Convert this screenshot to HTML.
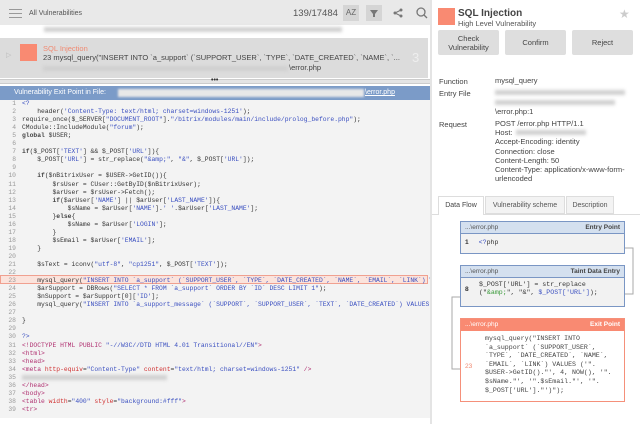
<!DOCTYPE html>
<html><head><meta charset="utf-8"><style>
*{margin:0;padding:0;box-sizing:border-box}
body{width:640px;height:424px;overflow:hidden;background:#fff;font-family:"Liberation Sans",sans-serif;font-size:8px;color:#333;position:relative}
.abs{position:absolute}
.blur{background:#d0d0d0;filter:blur(1.5px);height:5px;position:absolute}
.code{position:absolute;left:0;top:100px;width:430px;height:318px;background:#f3f3f3;font-family:"Liberation Mono",monospace;font-size:6.35px;color:#333}
.ln{position:absolute;left:0;width:430px;height:8.05px;line-height:8.05px;white-space:pre;overflow:hidden}
.ln b{font-weight:normal;display:inline-block;width:16px;text-align:right;color:#999;margin-right:6px}
.s{color:#3a4fc0}.k{color:#444;font-weight:bold}.t{color:#b03070}.a{color:#d03030}
.btn{position:absolute;top:30px;height:25px;width:61px;background:#dedede;border-radius:2px;font-size:7.5px;color:#444;text-align:center;display:flex;align-items:center;justify-content:center;line-height:9px}
.lbl{position:absolute;left:439px;font-size:7.5px;color:#444}
.val{position:absolute;left:495px;font-size:7.5px;color:#444;line-height:9.2px}
.box{position:absolute;left:460px;width:165px;border:1px solid #7a96c4;background:#f2f2f2;font-size:7px}
.bh{height:12px;background:#d4e0ef;border-bottom:1px solid #7a96c4;line-height:12px;padding:0 4px;color:#555;font-size:6.5px}
.bh span{float:right;font-weight:bold;color:#444}
.mono{font-family:"Liberation Mono",monospace;font-size:6.6px}
</style></head><body>
<div class="abs" style="left:0;top:0;width:430px;height:25px;background:#e9e9e9"></div>
<div class="abs" style="left:9px;top:9px;width:13px;height:1px;background:#999;box-shadow:0 4px 0 #999,0 8px 0 #999"></div>
<div class="abs" style="left:29px;top:10px;font-size:7px;color:#555">All Vulnerabilities</div>
<div class="abs" style="left:293px;top:8px;font-size:9.5px;color:#555">139/17484</div>
<div class="abs" style="left:343px;top:5px;width:16px;height:16px;background:#d5d5d5;font-size:8px;color:#666;text-align:center;line-height:16px">AZ</div>
<div class="abs" style="left:366px;top:5px;width:16px;height:16px;background:#d5d5d5"></div>
<svg class="abs" style="left:366px;top:5px" width="16" height="16"><path d="M4 5h8l-3 4v3h-2v-3z" fill="#777"/></svg>
<svg class="abs" style="left:390px;top:5px" width="16" height="16"><circle cx="5" cy="8" r="1.5" fill="#777"/><circle cx="11" cy="5" r="1.5" fill="#777"/><circle cx="11" cy="11" r="1.5" fill="#777"/><path d="M5 8L11 5M5 8L11 11" stroke="#777"/></svg>
<svg class="abs" style="left:414px;top:5px" width="16" height="16"><circle cx="7" cy="7" r="4" stroke="#777" fill="none" stroke-width="1.3"/><path d="M10 10l3 3" stroke="#777" stroke-width="1.3"/></svg>
<div class="blur" style="left:44px;top:27px;width:298px"></div>
<div class="abs" style="left:0;top:38px;width:428px;height:40px;background:#dcdcdc"></div>
<div class="abs" style="left:6px;top:51px;color:#bbb;font-size:7px">▷</div>
<div class="abs" style="left:20px;top:44px;width:17px;height:17px;background:#f98a72"></div>
<div class="abs" style="left:43px;top:44px;font-size:7.5px;color:#f08a72">SQL Injection</div>
<div class="abs" style="left:43px;top:53px;font-size:7.5px;color:#444;white-space:nowrap">23 mysql_query("INSERT INTO `a_support` (`SUPPORT_USER`, `TYPE`, `DATE_CREATED`, `NAME`, `...</div>
<div class="blur" style="left:43px;top:66px;width:245px"></div>
<div class="abs" style="left:289px;top:63px;font-size:7.5px;color:#444">\error.php</div>
<div class="abs" style="left:412px;top:50px;font-size:13px;color:#eee">3</div>
<div class="abs" style="left:0;top:79px;width:430px;height:5px;background:#e4e4e4;border-top:1px solid #ccc;border-bottom:1px solid #ccc"></div>
<div class="abs" style="left:211px;top:77px;font-size:7px;color:#333;font-weight:bold">•••</div>
<div class="abs" style="left:0;top:86px;width:430px;height:14px;background:#7b9bc8"></div>
<div class="abs" style="left:14px;top:89px;font-size:7px;color:#fff">Vulnerability Exit Point in File:</div>
<div class="abs" style="left:118px;top:89px;width:246px;height:8px;background:#e8e8e8;filter:blur(1px)"></div>
<div class="abs" style="left:365px;top:89px;font-size:7px;color:#fff;text-decoration:underline">\error.php</div>
<div class="code">
<div class="abs" style="left:0;top:175px;width:428px;height:9px;background:#fbe3dc;border:1px solid #f0a090"></div>
<div class="ln" style="top:0"><b>1</b><span class="s">&lt;?</span></div>
<div class="ln" style="top:8.05px"><b>2</b>    header(<span class="s">'Content-Type: text/html; charset=windows-1251'</span>);</div>
<div class="ln" style="top:16.1px"><b>3</b>require_once($_SERVER[<span class="s">"DOCUMENT_ROOT"</span>].<span class="s">"/bitrix/modules/main/include/prolog_before.php"</span>);</div>
<div class="ln" style="top:24.15px"><b>4</b>CModule::IncludeModule(<span class="s">"forum"</span>);</div>
<div class="ln" style="top:32.2px"><b>5</b><span class="k">global</span> $USER;</div>
<div class="ln" style="top:40.25px"><b>6</b></div>
<div class="ln" style="top:48.3px"><b>7</b><span class="k">if</span>($_POST[<span class="s">'TEXT'</span>] &amp;&amp; $_POST[<span class="s">'URL'</span>]){</div>
<div class="ln" style="top:56.35px"><b>8</b>    $_POST[<span class="s">'URL'</span>] = str_replace(<span class="s">"&amp;amp;"</span>, <span class="s">"&amp;"</span>, $_POST[<span class="s">'URL'</span>]);</div>
<div class="ln" style="top:64.4px"><b>9</b></div>
<div class="ln" style="top:72.45px"><b>10</b>    <span class="k">if</span>($nBitrixUser = $USER-&gt;GetID()){</div>
<div class="ln" style="top:80.5px"><b>11</b>        $rsUser = CUser::GetByID($nBitrixUser);</div>
<div class="ln" style="top:88.55px"><b>12</b>        $arUser = $rsUser-&gt;Fetch();</div>
<div class="ln" style="top:96.6px"><b>13</b>        <span class="k">if</span>($arUser[<span class="s">'NAME'</span>] || $arUser[<span class="s">'LAST_NAME'</span>]){</div>
<div class="ln" style="top:104.65px"><b>14</b>            $sName = $arUser[<span class="s">'NAME'</span>].<span class="s">' '</span>.$arUser[<span class="s">'LAST_NAME'</span>];</div>
<div class="ln" style="top:112.7px"><b>15</b>        }<span class="k">else</span>{</div>
<div class="ln" style="top:120.75px"><b>16</b>            $sName = $arUser[<span class="s">'LOGIN'</span>];</div>
<div class="ln" style="top:128.8px"><b>17</b>        }</div>
<div class="ln" style="top:136.85px"><b>18</b>        $sEmail = $arUser[<span class="s">'EMAIL'</span>];</div>
<div class="ln" style="top:144.9px"><b>19</b>    }</div>
<div class="ln" style="top:152.95px"><b>20</b></div>
<div class="ln" style="top:161px"><b>21</b>    $sText = iconv(<span class="s">"utf-8"</span>, <span class="s">"cp1251"</span>, $_POST[<span class="s">'TEXT'</span>]);</div>
<div class="ln" style="top:169.05px"><b>22</b></div>
<div class="ln" style="top:177.1px"><b>23</b>    mysql_query(<span class="s">"INSERT INTO `a_support` (`SUPPORT_USER`, `TYPE`, `DATE_CREATED`, `NAME`, `EMAIL`, `LINK`) VALUES</span></div>
<div class="ln" style="top:185.15px"><b>24</b>    $arSupport = DBRows(<span class="s">"SELECT * FROM `a_support` ORDER BY `ID` DESC LIMIT 1"</span>);</div>
<div class="ln" style="top:193.2px"><b>25</b>    $nSupport = $arSupport[0][<span class="s">'ID'</span>];</div>
<div class="ln" style="top:201.25px"><b>26</b>    mysql_query(<span class="s">"INSERT INTO `a_support_message` (`SUPPORT`, `SUPPORT_USER`, `TEXT`, `DATE_CREATED`) VALUES</span></div>
<div class="ln" style="top:209.3px"><b>27</b></div>
<div class="ln" style="top:217.35px"><b>28</b>}</div>
<div class="ln" style="top:225.4px"><b>29</b></div>
<div class="ln" style="top:233.45px"><b>30</b><span class="s">?&gt;</span></div>
<div class="ln" style="top:241.5px"><b>31</b><span class="t">&lt;!DOCTYPE HTML PUBLIC</span> <span class="s">"-//W3C//DTD HTML 4.01 Transitional//EN"</span><span class="t">&gt;</span></div>
<div class="ln" style="top:249.55px"><b>32</b><span class="t">&lt;html&gt;</span></div>
<div class="ln" style="top:257.6px"><b>33</b><span class="t">&lt;head&gt;</span></div>
<div class="ln" style="top:265.65px"><b>34</b><span class="t">&lt;meta</span> <span class="a">http-equiv</span>=<span class="s">"Content-Type"</span> <span class="a">content</span>=<span class="s">"text/html; charset=windows-1251"</span> <span class="t">/&gt;</span></div>
<div class="ln" style="top:273.7px"><b>35</b></div>
<div class="blur" style="left:22px;top:275px;width:145px"></div>
<div class="ln" style="top:281.75px"><b>36</b><span class="t">&lt;/head&gt;</span></div>
<div class="ln" style="top:289.8px"><b>37</b><span class="t">&lt;body&gt;</span></div>
<div class="ln" style="top:297.85px"><b>38</b><span class="t">&lt;table</span> <span class="a">width</span>=<span class="s">"400"</span> <span class="a">style</span>=<span class="s">"background:#fff"</span><span class="t">&gt;</span></div>
<div class="ln" style="top:305.9px"><b>39</b><span class="t">&lt;tr&gt;</span></div>
</div>
<div class="abs" style="left:430px;top:0;width:2px;height:424px;background:#e4e4e4"></div>
<div class="abs" style="left:438px;top:8px;width:17px;height:17px;background:#f98a72"></div>
<div class="abs" style="left:458px;top:8px;font-size:10px;font-weight:bold;color:#444">SQL Injection</div>
<div class="abs" style="left:458px;top:19px;font-size:7.5px;color:#555">High Level Vulnerability</div>
<div class="abs" style="left:619px;top:7px;font-size:12px;color:#ccc">★</div>
<div class="btn" style="left:438px">Check<br>Vulnerability</div>
<div class="btn" style="left:505px">Confirm</div>
<div class="btn" style="left:572px">Reject</div>
<div class="lbl" style="top:77px">Function</div>
<div class="val" style="top:76px">mysql_query</div>
<div class="lbl" style="top:89px">Entry File</div>
<div class="blur" style="left:495px;top:90px;width:130px"></div>
<div class="blur" style="left:495px;top:100px;width:120px"></div>
<div class="val" style="top:107px">\error.php:1</div>
<div class="lbl" style="top:120px">Request</div>
<div class="val" style="top:119px">POST /error.php HTTP/1.1<br>Host:<br>Accept-Encoding: identity<br>Connection: close<br>Content-Length: 50<br>Content-Type: application/x-www-form-<br>urlencoded</div>
<div class="blur" style="left:516px;top:130px;width:70px"></div>
<div class="abs" style="left:432px;top:214px;width:208px;height:1px;background:#ddd"></div>
<div class="abs" style="left:438px;top:196px;width:46px;height:19px;background:#fff;border:1px solid #ddd;border-bottom:none;font-size:7px;color:#444;text-align:center;line-height:17px">Data Flow</div>
<div class="abs" style="left:485px;top:196px;width:80px;height:18px;background:#f3f3f3;border:1px solid #ddd;font-size:7px;color:#555;text-align:center;line-height:17px">Vulnerability scheme</div>
<div class="abs" style="left:566px;top:196px;width:48px;height:18px;background:#f3f3f3;border:1px solid #ddd;font-size:7px;color:#555;text-align:center;line-height:17px">Description</div>
<svg class="abs" style="left:450px;top:230px" width="190" height="190"><path d="M175 18h8v46h-8" stroke="#aaa" fill="none"/><path d="M10 67h-8v72h8" stroke="#aaa" fill="none"/></svg>
<div class="box" style="top:221px;height:33px"><div class="bh">...\error.php<span>Entry Point</span></div><div style="padding:5px 4px" class="mono"><b style="font-family:'Liberation Sans';margin-right:10px">1</b><span class="s">&lt;?</span>php</div></div>
<div class="box" style="top:265px;height:42px"><div class="bh">...\error.php<span>Taint Data Entry</span></div><div style="padding:3px 4px;position:relative" class="mono"><b style="font-family:'Liberation Sans';position:absolute;left:4px;top:8px">8</b><div style="margin-left:14px;line-height:8px">$_POST['URL'] = str_replace<br>("<span style="color:#3a9a3a">&amp;amp;</span>", "&amp;", <span class="s">$_POST['URL']</span>);</div></div></div>
<div class="box" style="top:318px;height:84px;border-color:#f5907a;background:#fff"><div class="bh" style="background:#f98a72;border-color:#f98a72;color:#fff">...\error.php<span style="color:#fff">Exit Point</span></div><div style="padding:4px 4px;position:relative" class="mono"><b style="font-family:'Liberation Sans';font-weight:normal;color:#f08a72;position:absolute;left:4px;top:32px">23</b><div style="margin-left:20px;line-height:8.6px;color:#444">mysql_query("INSERT INTO<br>`a_support` (`SUPPORT_USER`,<br>`TYPE`, `DATE_CREATED`, `NAME`,<br>`EMAIL`, `LINK`) VALUES ('".<br>$USER-&gt;GetID()."', 4, NOW(), '".<br>$sName."', '".$sEmail."', '".<br>$_POST['URL']."')");</div></div></div>
</body></html>
